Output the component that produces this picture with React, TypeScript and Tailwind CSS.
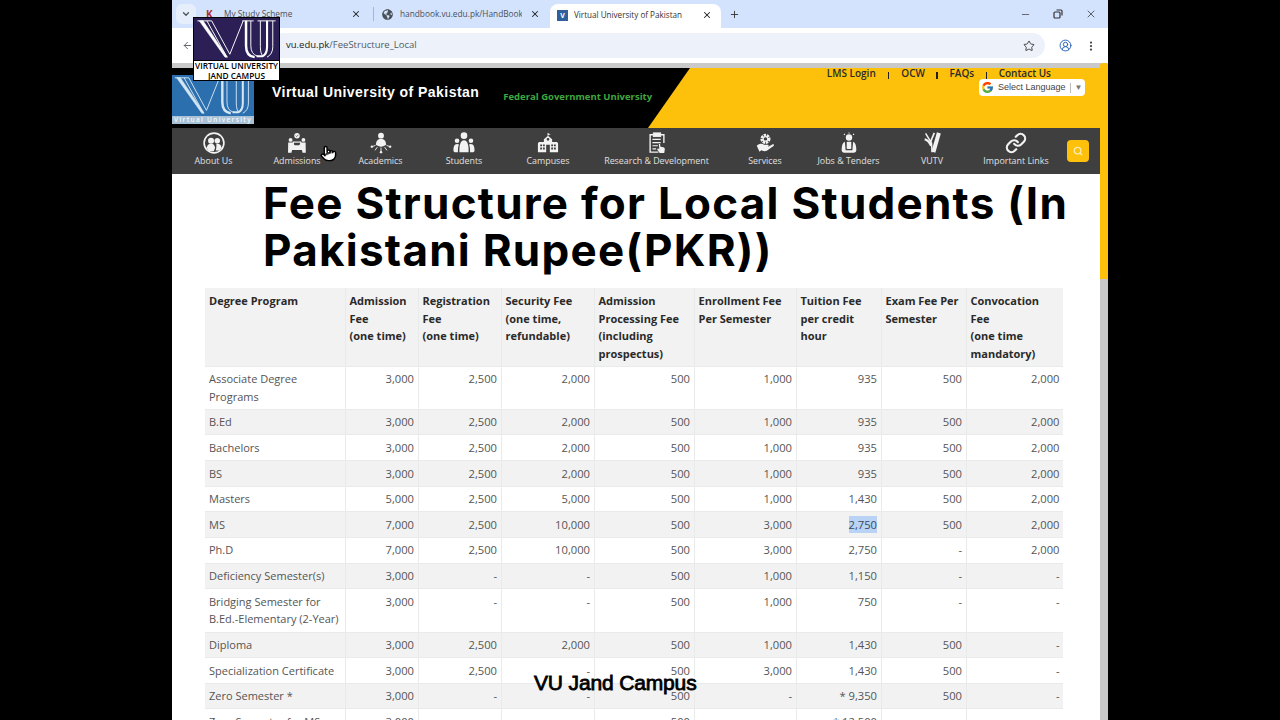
import { ArrowLeft, ChevronDown, EllipsisVertical, Link as LinkIcon, Minus, Plus, Search, Star, X, CircleUserRound, Pointer } from 'lucide-react'
import { FaGlobeAmericas } from 'react-icons/fa'
import { FcGoogle } from 'react-icons/fc'

const rows = [
  { name: ['Associate Degree', 'Programs'], v: ['3,000', '2,500', '2,000', '500', '1,000', '935', '500', '2,000'] },
  { name: ['B.Ed'], v: ['3,000', '2,500', '2,000', '500', '1,000', '935', '500', '2,000'] },
  { name: ['Bachelors'], v: ['3,000', '2,500', '2,000', '500', '1,000', '935', '500', '2,000'] },
  { name: ['BS'], v: ['3,000', '2,500', '2,000', '500', '1,000', '935', '500', '2,000'] },
  { name: ['Masters'], v: ['5,000', '2,500', '5,000', '500', '1,000', '1,430', '500', '2,000'] },
  { name: ['MS'], v: ['7,000', '2,500', '10,000', '500', '3,000', '2,750', '500', '2,000'] },
  { name: ['Ph.D'], v: ['7,000', '2,500', '10,000', '500', '3,000', '2,750', '-', '2,000'] },
  { name: ['Deficiency Semester(s)'], v: ['3,000', '-', '-', '500', '1,000', '1,150', '-', '-'] },
  { name: ['Bridging Semester for', 'B.Ed.-Elementary (2-Year)'], v: ['3,000', '-', '-', '500', '1,000', '750', '-', '-'] },
  { name: ['Diploma'], v: ['3,000', '2,500', '2,000', '500', '1,000', '1,430', '500', '-'] },
  { name: ['Specialization Certificate'], v: ['3,000', '2,500', '-', '500', '3,000', '1,430', '500', '-'] },
  { name: ['Zero Semester *'], v: ['3,000', '-', '-', '500', '-', '* 9,350', '500', '-'] },
  { name: ['Zero Semester for MS'], v: ['3,000', '-', '-', '500', '-', '* 12,500', '-', '-'] },
]

const heads = [
  ['Degree Program'],
  ['Admission', 'Fee', '(one time)'],
  ['Registration', 'Fee', '(one time)'],
  ['Security Fee', '(one time,', 'refundable)'],
  ['Admission', 'Processing Fee', '(including', 'prospectus)'],
  ['Enrollment Fee', 'Per Semester'],
  ['Tuition Fee', 'per credit', 'hour'],
  ['Exam Fee Per', 'Semester'],
  ['Convocation', 'Fee', '(one time', 'mandatory)'],
]

function VuMark({ className }: { className: string }) {
  return (
    <svg viewBox="0 0 86 44" className={className} fill="none" stroke="currentColor">
      {/* V */}
      <path d="M2 3h15L36 38 50 3" strokeWidth="1" />
      <path d="M4 3 31 41h2.500L8 3z" fill="currentColor" strokeWidth=".6" />
      <path d="M12 3 33 41" strokeWidth="1" />
      {/* U */}
      <path d="M49 3h12M65 3h19" strokeWidth="1" />
      <path d="M53 3v26q0 11 9 12" strokeWidth="2.600" />
      <path d="M58 3v26q0 9 7 11" strokeWidth="1" />
      <path d="M68 3v27q0 8 3 10" strokeWidth="1" />
      <path d="M75 3v27q0 8-5 10h-6" strokeWidth="2.200" />
      <path d="M81 3v27q0 8-6 11" strokeWidth="1" />
    </svg>
  )
}

function NavIcon({ name }: { name: string }) {
  const cls = 'h-[22px] w-[24px] text-[#f2f2f2]'
  switch (name) {
    case 'about':
      return (
        <svg viewBox="0 0 24 24" className={cls} fill="currentColor">
          <circle cx="12" cy="12" r="10.800" fill="none" stroke="currentColor" strokeWidth="1.800" />
          <circle cx="8.800" cy="9.500" r="3.300" />
          <circle cx="15.600" cy="9.500" r="3" />
          <path d="M4 17.500c.4-3.400 2.200-4.800 4.800-4.800s4.200 1.400 4.400 4.800l-1.500 3.500H6.500zM14.500 12.800c3.200-.5 5.300.9 5.800 4.400l-2.500 3H14c.6-2.600.8-5.400.5-7.400z" />
        </svg>
      )
    case 'admissions':
      return (
        <svg viewBox="0 0 24 24" className={cls} fill="currentColor">
          <circle cx="12" cy="4" r="3" />
          <path d="M10.600 4l1 1 2-2" stroke="#3f3f3f" strokeWidth=".8" fill="none" />
          <circle cx="5" cy="8.600" r="2.100" />
          <circle cx="19" cy="8.600" r="2.100" />
          <path d="M2.400 11.500h5l2 3h5l2-3h5l.2 11H18l-.6-3H6.600L6 22.500H2.200z" />
          <rect x="8" y="11" width="8" height="7" fill="none" stroke="currentColor" strokeWidth="1.300" />
        </svg>
      )
    case 'academics':
      return (
        <svg viewBox="0 0 24 24" className={cls} fill="currentColor">
          <circle cx="12" cy="4" r="3.200" />
          <path d="M6.500 14c0-4.500 2-6.500 5.500-6.500s5.500 2 5.500 6.500c-1.500 1.300-3.300 2-5.500 2s-4-.7-5.500-2z" />
          <path d="M12 17v5M6 14.500l-3.500 1.500M18 14.500l3.500 1.500M8 16.500 5.500 20M16 16.500l2.500 3.500" stroke="currentColor" strokeWidth="1" />
          <circle cx="2" cy="16" r="1.300" />
          <circle cx="22" cy="16" r="1.300" />
          <circle cx="12" cy="22" r="1.300" />
        </svg>
      )
    case 'students':
      return (
        <svg viewBox="0 0 24 24" className={cls} fill="currentColor">
          <circle cx="12" cy="4" r="3.600" />
          <circle cx="4.400" cy="9.500" r="2.500" />
          <circle cx="19.600" cy="9.500" r="2.500" />
          <path d="M7 22c-.3-7 1-13 5-13s5.300 6 5 13z" />
          <path d="M.500 20c0-4 1-7 4-7 1 0 1.500.3 2 .7C5.500 16 5.300 19 5.400 22H2c-1 0-1.500-1-1.500-2zM23.500 20c0-4-1-7-4-7-1 0-1.500.3-2 .7 1 2.300 1.200 5.300 1.100 8.300H22c1 0 1.500-1 1.500-2z" />
        </svg>
      )
    case 'campuses':
      return (
        <svg viewBox="0 0 24 24" className={cls} fill="currentColor">
          <path d="M12 1v3" stroke="currentColor" strokeWidth="1" />
          <path d="M12 1.500l3 1-3 1z" />
          <path fillRule="evenodd" d="M12 4l4.500 4v3H22l1 1.500V22H1v-9.500L2 11h5.500V8zM12 6.500a1.500 1.500 0 1 0 0 3 1.500 1.500 0 0 0 0-3zM3.500 13.500v2h2v-2zm3 0v2h2v-2zm9 0v2h2v-2zm3 0v2h2v-2zm-15 3.500v2h2v-2zm3 0v2h2v-2zm9 0v2h2v-2zm3 0v2h2v-2zM10 14v8h4v-8z" />
        </svg>
      )
    case 'research':
      return (
        <svg viewBox="0 0 24 24" className={cls} fill="none" stroke="currentColor">
          <path d="M8 3H4.500v19h9M16 3h3.500v9" strokeWidth="1.500" />
          <rect x="8" y="1" width="8" height="4" fill="currentColor" />
          <path d="M7 8h9M7 11.500h9M7 15h6M7 18.500h4" strokeWidth="1.300" />
          <path d="M14 13l1.300 0 .5 3 3 .6c1.200.3 1.800 1 1.700 2.400l-.6 4h-5l-3-4.500 1.400-.6 1.200 1z" fill="currentColor" stroke="none" />
        </svg>
      )
    case 'services':
      return (
        <svg viewBox="0 0 24 24" className={cls} fill="currentColor">
          <circle cx="12.500" cy="7.500" r="4" fill="none" stroke="currentColor" strokeWidth="3" strokeDasharray="2.500 .8" />
          <circle cx="12.500" cy="7.500" r="2.500" fill="none" stroke="currentColor" strokeWidth="1.200" />
          <path d="M3 15c3-2.500 5.500-2.500 8-1.200l4 .2c1.300.1 1.300 2 0 2h-3.500 4l4.500-2.500c1.500-.7 2.500.8 1.300 1.800L14 20.500c-2 .8-4 .4-6-.5l-2 1.500z" />
        </svg>
      )
    case 'jobs':
      return (
        <svg viewBox="0 0 24 24" className={cls} fill="currentColor">
          <circle cx="12" cy="6" r="3.500" />
          <path d="M12 .500v1M6.500 2l1 1M17.500 2l-1 1" stroke="currentColor" strokeWidth="1.200" />
          <path d="M7.500 10.500c-2.500 1-3.500 4-3.500 9 0 1.500 1 3 3 3h10c2 0 3-1.500 3-3 0-5-1-8-3.500-9l-.8 9.500H8.300z" />
          <rect x="9.500" y="10.500" width="5" height="8" rx="1" />
        </svg>
      )
    case 'vutv':
      return (
        <svg viewBox="0 0 24 24" className={cls} fill="none" stroke="currentColor">
          <path d="M5 1.500 11.500 12l.5 10" strokeWidth="1.600" />
          <path d="M4 8c3 .5 5.500 3.500 7 7" strokeWidth="2.400" />
          <path d="M19.500 1 13.500 22" strokeWidth="4.400" />
          <path d="M14.500 1 9.500 13" strokeWidth="1.800" />
        </svg>
      )
    default:
      return <LinkIcon className={cls} strokeWidth={2.4} />
  }
}

const nav = [
  ['about', 'About Us', 'w-[83px]'],
  ['admissions', 'Admissions', 'w-[84px]'],
  ['academics', 'Academics', 'w-[83px]'],
  ['students', 'Students', 'w-[84px]'],
  ['campuses', 'Campuses', 'w-[84px]'],
  ['research', 'Research & Development', 'w-[133px]'],
  ['services', 'Services', 'w-[84px]'],
  ['jobs', 'Jobs & Tenders', 'w-[83px]'],
  ['vutv', 'VUTV', 'w-[84px]'],
  ['links', 'Important Links', 'w-[84px]'],
]

export default function App() {
  return (
    <div className="relative flex h-[720px] w-[1280px] justify-center overflow-hidden bg-black font-['Open_Sans',sans-serif]">
      <div className="flex w-[936px] flex-col">
        {/* tab strip */}
        <div className="flex h-[28px] shrink-0 items-end bg-[#d3e3fd] text-[8.300px] text-[#4a5056]">
          <div className="mb-[4px] ml-[4px] flex h-[20px] w-[20px] items-center justify-center rounded-md bg-[#e6eefc]">
            <ChevronDown size={10} strokeWidth={3} />
          </div>
          <div className="mb-[7px] ml-[10px] flex h-[14px] w-[168px] items-center border-r border-[#a9b6c9]">
            <span className="w-[12px] text-[10px] font-bold text-[#b02a2a]">K</span>
            <span className="ml-[6px] w-[127px] truncate">My Study Scheme</span>
            <X size={10} strokeWidth={2.500} className="text-[#222]" />
          </div>
          <div className="mb-[7px] ml-[8px] flex h-[14px] w-[168px] items-center">
            <FaGlobeAmericas size={11} className="text-[#4a5058]" />
            <span className="ml-[7px] w-[122px] overflow-hidden whitespace-nowrap">handbook.vu.edu.pk/HandBook</span>
            <X size={10} strokeWidth={2.500} className="ml-[8px] text-[#222]" />
          </div>
          <div className="flex h-[24px] w-[171px] items-center rounded-t-lg bg-white pb-[2px] pl-[7px] text-[8.100px] text-[#333]">
            <span className="flex h-[11px] w-[11px] items-center justify-center bg-[#2f5f9c] text-[7px] font-bold leading-none text-white">V</span>
            <span className="ml-[6px] w-[128px] truncate">Virtual University of Pakistan</span>
            <X size={10} strokeWidth={2.500} className="text-[#222]" />
          </div>
          <Plus size={11} strokeWidth={2} className="mb-[8px] ml-[8px] text-[#333]" />
          <div className="mb-[8px] ml-auto flex items-center gap-[22px] pr-[11px] text-[#333]">
            <Minus size={11} strokeWidth={1.500} />
            <svg viewBox="0 0 10 10" className="h-[10px] w-[10px]" fill="none" stroke="currentColor" strokeWidth="1.200">
              <rect x="1" y="3" width="6" height="6" rx="1" />
              <path d="M3.500 1H8a1 1 0 0 1 1 1v4.500" />
            </svg>
            <X size={12} strokeWidth={1.500} />
          </div>
        </div>

        {/* toolbar */}
        <div className="flex h-[35px] shrink-0 items-center bg-white text-[#555b60]">
          <ArrowLeft size={11} strokeWidth={2} className="ml-[10px]" />
          <div className="ml-[77px] flex h-[25px] w-[775px] items-center justify-between rounded-full bg-[#edf2fa] pl-[16px] pr-[10px]">
            <span className="text-[9.500px]">
              <span className="text-[#222]">vu.edu.pk</span>/FeeStructure_Local
            </span>
            <Star size={12} strokeWidth={1.800} className="text-[#333]" />
          </div>
          <CircleUserRound size={13} strokeWidth={1.800} className="ml-[14px] text-[#2b62b8]" />
          <EllipsisVertical size={12} strokeWidth={2.500} className="ml-[13px] text-[#444]" />
        </div>

        {/* page + scrollbar */}
        <div className="flex min-h-0 flex-1">
          <div className="flex w-[928px] flex-col bg-white">
            <div className="h-[5px] shrink-0 bg-[#c9c9c9]" />
            <header className="flex h-[60px] shrink-0 bg-black">
              <div className="flex w-[476px] shrink-0 items-start">
                <div className="mt-[7px] flex h-[49px] w-[82px] shrink-0 flex-col items-center bg-[#2c6fae] text-[#d5e6f3]">
                  <VuMark className="h-[41px] w-[82px]" />
                  <span className="h-[8px] w-full bg-[#a9c2d8] text-center text-[6.500px] font-semibold leading-[8px] tracking-[1.300px] text-[#f4f8fb]">Virtual University</span>
                </div>
                <span className="ml-[18px] mt-[15px] whitespace-nowrap font-['Liberation_Sans',sans-serif] text-[14px] font-bold leading-[18px] tracking-[.46px] text-white">
                  Virtual University of Pakistan
                </span>
                <span className="ml-[24px] mt-[22px] whitespace-nowrap text-[9.500px] font-bold leading-[14px] text-[#3ea83e]">
                  Federal Government University
                </span>
              </div>
              <div className="flex-1 [clip-path:polygon(42px_0,100%_0,100%_100%,0_100%)] bg-[#fdc00b]">
                <div className="flex h-[11px] items-center justify-end pr-[49px] text-[10px] font-semibold text-[#2b2b2b]">
                  <span>LMS Login</span>
                  <span className="mx-[12px] mt-[4px] h-[7px] w-[1.500px] bg-[#222]" />
                  <span>OCW</span>
                  <span className="mx-[11.500px] mt-[4px] h-[7px] w-[1.500px] bg-[#222]" />
                  <span>FAQs</span>
                  <span className="mx-[11.500px] mt-[4px] h-[7px] w-[1.500px] bg-[#222]" />
                  <span>Contact Us</span>
                </div>
                <div className="ml-[331px] flex h-[17px] w-[106px] items-center rounded-sm bg-white pl-[2px] font-['Liberation_Sans',sans-serif] text-[9px] text-[#444]">
                  <FcGoogle size={13} />
                  <span className="ml-[4px]">Select Language</span>
                  <span className="ml-[4px] border-l border-[#bbb] pl-[4px] text-[8px] leading-[10px] text-[#777]">▼</span>
                </div>
              </div>
            </header>
            <nav className="flex h-[46px] shrink-0 items-center bg-[#3f3f3f] pb-[3px]">
              {nav.map(([icon, label, w]) => (
                <div key={label} className={`flex flex-col items-center ${w}`}>
                  <NavIcon name={icon} />
                  <span className="mt-[1px] text-[8.900px] leading-[12px] text-[#e0e0e0]">{label}</span>
                </div>
              ))}
              <div className="ml-[9px] mt-[3px] flex h-[22px] w-[22px] items-center justify-center rounded-[4px] bg-[#fdc00b]">
                <Search size={10} strokeWidth={3} className="text-[#ffeeb0]" />
              </div>
            </nav>
            <main className="flex-1 overflow-hidden">
              <h1 className="whitespace-nowrap pl-[91px] pt-[6px] font-['Inter',sans-serif] text-[44px] font-bold leading-[47px] tracking-[1.250px] text-black">
                Fee Structure for Local Students (In
                <br />
                Pakistani Rupee(PKR))
              </h1>
              <table className="ml-[33px] mt-[14px] w-[858px] table-fixed border-collapse text-[11.200px] leading-[17.640px] text-[#555]">
                <colgroup>
                  <col className="w-[140px]" />
                  <col className="w-[73px]" />
                  <col className="w-[83px]" />
                  <col className="w-[93px]" />
                  <col className="w-[100px]" />
                  <col className="w-[102px]" />
                  <col className="w-[85px]" />
                  <col className="w-[85px]" />
                  <col className="w-[97px]" />
                </colgroup>
                <thead>
                  <tr className="bg-[#f2f2f2]">
                    {heads.map((h) => (
                      <th key={h[0]} className="h-[78px] border-r border-[#e9eaea] px-[4px] pb-[3px] pt-[4px] text-left align-top text-[11px] font-bold leading-[17.500px] text-[#2a2a2a] last:border-r-0">
                        {h.map((l) => (
                          <div key={l} className="whitespace-nowrap">{l}</div>
                        ))}
                      </th>
                    ))}
                  </tr>
                </thead>
                <tbody>
                  {rows.map((r, i) => (
                    <tr key={r.name[0]} className={i % 2 === 1 ? 'bg-[#f2f2f2]' : 'bg-white'}>
                      <td className="whitespace-nowrap border-r border-t border-[#e9eaea] pb-[3.500px] pl-[4px] pr-[2px] pt-[3.500px] align-top text-[11px]">
                        {r.name.map((n) => (
                          <div key={n}>{n}</div>
                        ))}
                      </td>
                      {r.v.map((v, j) => (
                        <td key={j} className="border-r border-t border-[#e9eaea] pb-[3.500px] pl-[4px] pr-[3.500px] pt-[3.500px] text-right align-top last:border-r-0">
                          {i === 5 && j === 5 ? <span className="inline-block bg-[#b8d3f5] leading-[17px] text-[#3a4a5a]">{v}</span> : v}
                        </td>
                      ))}
                    </tr>
                  ))}
                </tbody>
              </table>
            </main>
          </div>
          <div className="w-[8px] shrink-0 bg-[#c8c8c8]">
            <div className="h-[216px] rounded-t-[3px] bg-[#fdc00b]" />
          </div>
        </div>
      </div>

      {/* overlays from the video: campus logo, pointer, caption */}
      <div className="absolute left-[193px] top-[17px] w-[87px] border border-black bg-white">
        <div className="flex h-[42px] items-center justify-center bg-[#2b1f55] text-white">
          <VuMark className="h-[42px] w-[85px]" />
        </div>
        <div className="whitespace-nowrap text-center text-[8.300px] font-semibold leading-[9.500px] text-black">
          <div className="border-t border-black">VIRTUAL UNIVERSITY</div>
          <div>JAND CAMPUS</div>
        </div>
      </div>
      <Pointer size={17} strokeWidth={2} className="absolute left-[320px] top-[145px] fill-white text-black" />
      <div className="absolute left-[534px] top-[670px] font-['Liberation_Sans',sans-serif] text-[21px] leading-[26px] tracking-[-.15px] text-black [-webkit-text-stroke:0.8px_black]">
        VU Jand Campus
      </div>
    </div>
  )
}
